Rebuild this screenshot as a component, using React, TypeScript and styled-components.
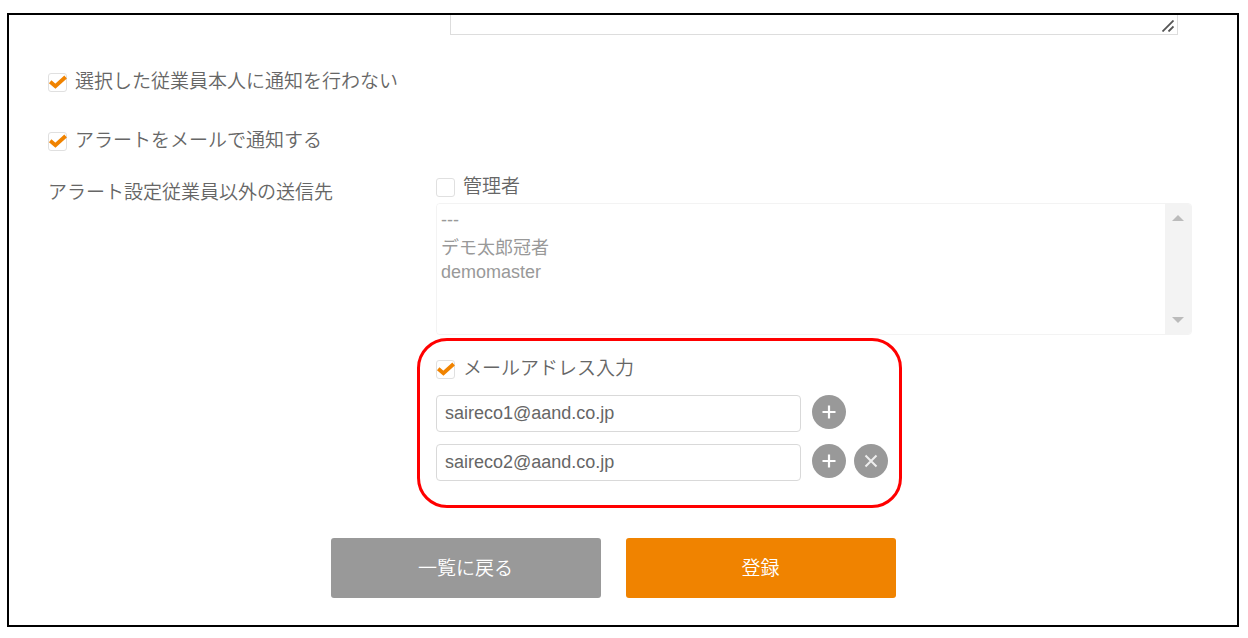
import React, { useState } from "react";
import styled, { createGlobalStyle } from "styled-components";

const GlobalStyle = createGlobalStyle`
  *, *::before, *::after { box-sizing: border-box; }
  body {
    margin: 0;
    background: #fff;
    color: #666;
    font-family: "Liberation Sans", "Noto Sans CJK JP", sans-serif;
    font-size: 19px;
    font-weight: 350;
    line-height: 28px;
  }
  button, input, select, textarea { font: inherit; color: inherit; }
`;

const Frame = styled.main`
  margin: 13px 9px 11px 7px;
  padding: 0 45px 27px 39px;
  border: 2px solid #000;
`;

const Columns = styled.div`
  display: grid;
  grid-template-columns: 388px 1fr;
`;

const MessageField = styled.div`
  grid-column: 2;
  position: relative;
  margin: 0 14px;
`;

const MessageArea = styled.textarea`
  display: block;
  width: 100%;
  height: 20px;
  padding: 0 8px;
  border: 1px solid #ddd;
  border-top: 0;
  resize: none;
  overflow: hidden;
  outline: none;
`;

const Grip = styled.svg`
  position: absolute;
  right: 4px;
  bottom: 3px;
`;

const Options = styled.div`
  display: grid;
  gap: 31px;
  margin: 33px 0 18px;
`;

const CheckLabel = styled.label`
  display: flex;
  align-items: center;
  gap: 8px;
  width: fit-content;
`;

const CheckSlot = styled.span`
  display: grid;
  width: 19px;
  height: 19px;
  margin-top: 1px;

  > * { grid-area: 1 / 1; }
`;

const CheckInput = styled.input`
  appearance: none;
  width: 19px;
  height: 19px;
  margin: 0;
  border: 1px solid #e0e0e0;
  border-radius: 3px;
  background: #fff;
`;

const Tick = styled.svg`
  pointer-events: none;
`;

const FieldTitle = styled.div`
  padding-top: 6px;
`;

const ListBox = styled.div`
  display: flex;
  height: 132px;
  margin-top: 2px;
  border: 1px solid #f3f3f3;
  border-radius: 4px;
  overflow: hidden;
`;

const Recipients = styled.select`
  flex: 1;
  min-width: 0;
  padding: 3px 0 0 4px;
  border: 0;
  background: #fff;
  font-size: 18px;
  overflow: hidden;
  outline: none;
  scrollbar-width: none;

  &:disabled { opacity: 1; }

  option {
    display: flex;
    align-items: center;
    height: 26px;
    min-height: 26px;
    padding: 0;
    color: #999;
  }
`;

const Rail = styled.div`
  display: flex;
  flex-direction: column;
  justify-content: space-between;
  align-items: center;
  width: 26px;
  padding: 11px 0;
  background: #f3f3f3;
`;

const MailGroup = styled.section`
  width: 485px;
  max-width: calc(100% + 19px);
  margin: 3px 0 0 -19px;
  padding: 14px 12px 24px 16px;
  border: 3px solid #f00;
  border-radius: 30px;
`;

const MailRows = styled.div`
  display: grid;
  gap: 12px;
  margin-top: 12px;
`;

const MailRow = styled.div`
  display: flex;
  gap: 8px;
`;

const MailInput = styled.input`
  width: 365px;
  min-width: 0;
  height: 37px;
  margin-right: 3px;
  padding: 0 8px;
  border: 1px solid #d9d9d9;
  border-radius: 4px;
  background: #fff;
  font-size: 18px;
  outline: none;
`;

const RoundButton = styled.button`
  display: grid;
  place-items: center;
  flex: none;
  width: 34px;
  height: 34px;
  padding: 0;
  border: 0;
  border-radius: 50%;
  background: #999;
`;

const Actions = styled.div`
  display: flex;
  justify-content: center;
  gap: 25px;
  margin-top: 30px;
  padding-right: 14px;
`;

const ActionButton = styled.button<{ $primary?: boolean }>`
  width: 270px;
  height: 60px;
  padding: 2px 0 0;
  border: 0;
  border-radius: 3px;
  background: ${({ $primary }) => ($primary ? "#f08300" : "#999")};
  color: #fff;
`;

type CheckProps = { label: string; initial?: boolean };

function Check({ label, initial = false }: CheckProps) {
  const [checked, setChecked] = useState(initial);
  return (
    <CheckLabel>
      <CheckSlot>
        <CheckInput
          type="checkbox"
          checked={checked}
          onChange={(e) => setChecked(e.target.checked)}
        />
        {checked && (
          <Tick width="19" height="19" viewBox="0 0 19 19" aria-hidden="true">
            <path d="M2.2 8.8 L7.4 13.2 L17.6 4" fill="none" stroke="#f08300" strokeWidth="3.8" />
          </Tick>
        )}
      </CheckSlot>
      {label}
    </CheckLabel>
  );
}

function PlusIcon() {
  return (
    <svg width="14" height="14" viewBox="0 0 14 14" aria-hidden="true">
      <path d="M7 .5V13.5M.5 7H13.5" stroke="#fff" strokeWidth="2.2" />
    </svg>
  );
}

function CrossIcon() {
  return (
    <svg width="14" height="14" viewBox="0 0 14 14" aria-hidden="true">
      <path d="M1.5 1.5L12.5 12.5M12.5 1.5L1.5 12.5" stroke="#eee" strokeWidth="2" />
    </svg>
  );
}

export default function App() {
  const [mails, setMails] = useState(["saireco1@aand.co.jp", "saireco2@aand.co.jp"]);

  const change = (index: number, value: string) =>
    setMails(mails.map((m, i) => (i === index ? value : m)));
  const addAfter = (index: number) =>
    setMails([...mails.slice(0, index + 1), "", ...mails.slice(index + 1)]);
  const remove = (index: number) => setMails(mails.filter((_, i) => i !== index));

  return (
    <>
      <GlobalStyle />
      <Frame>
        <Columns>
          <MessageField>
            <MessageArea aria-label="メッセージ" />
            <Grip width="12" height="12" viewBox="0 0 12 12" aria-hidden="true">
              <path d="M.5 11.5L11.5 .5M6.5 11.5L11.5 6.5" stroke="#555" strokeWidth="1.8" />
            </Grip>
          </MessageField>
        </Columns>

        <Options>
          <Check label="選択した従業員本人に通知を行わない" initial />
          <Check label="アラートをメールで通知する" initial />
        </Options>

        <Columns>
          <FieldTitle>アラート設定従業員以外の送信先</FieldTitle>
          <div>
            <Check label="管理者" />
            <ListBox>
              <Recipients multiple disabled size={5} aria-label="管理者">
                <option>---</option>
                <option>デモ太郎冠者</option>
                <option>demomaster</option>
              </Recipients>
              <Rail aria-hidden="true">
                <svg width="12" height="6" viewBox="0 0 12 6">
                  <path d="M6 0L12 6H0Z" fill="#bbb" />
                </svg>
                <svg width="12" height="6" viewBox="0 0 12 6">
                  <path d="M0 0H12L6 6Z" fill="#bbb" />
                </svg>
              </Rail>
            </ListBox>
            <MailGroup>
              <Check label="メールアドレス入力" initial />
              <MailRows>
                {mails.map((mail, i) => (
                  <MailRow key={i}>
                    <MailInput
                      type="email"
                      aria-label={`メールアドレス${i + 1}`}
                      value={mail}
                      onChange={(e) => change(i, e.target.value)}
                    />
                    <RoundButton type="button" aria-label="追加" onClick={() => addAfter(i)}>
                      <PlusIcon />
                    </RoundButton>
                    {i > 0 && (
                      <RoundButton type="button" aria-label="削除" onClick={() => remove(i)}>
                        <CrossIcon />
                      </RoundButton>
                    )}
                  </MailRow>
                ))}
              </MailRows>
            </MailGroup>
          </div>
        </Columns>

        <Actions>
          <ActionButton type="button">一覧に戻る</ActionButton>
          <ActionButton type="submit" $primary>
            登録
          </ActionButton>
        </Actions>
      </Frame>
    </>
  );
}
